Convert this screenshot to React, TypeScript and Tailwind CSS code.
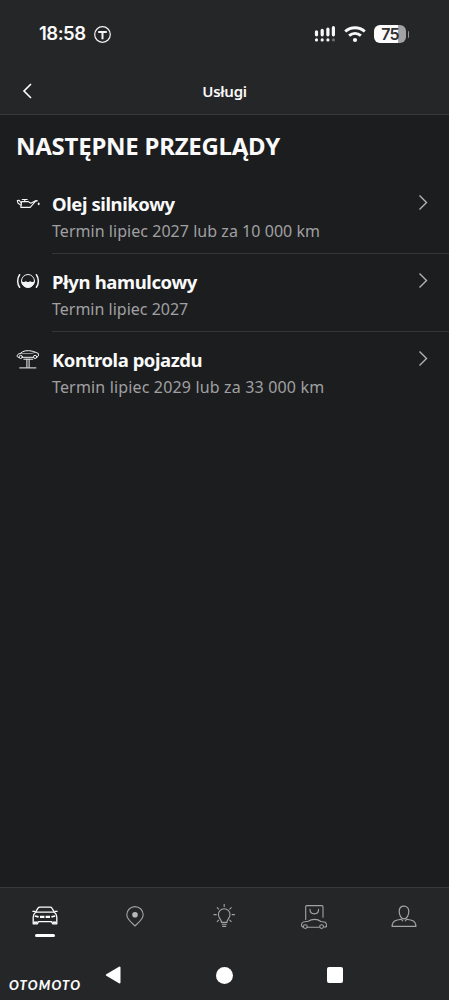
import React from 'react';

const OilIcon: React.FC = () => (
    <svg width="24" height="24" viewBox="0 0 24 24" fill="none" stroke="#f4f4f4" strokeWidth="1.1" strokeLinejoin="round" strokeLinecap="round">
        <path d="M5.6 9.6 4.8 15.4h9.4l5.2-6 2-.7-1.4-.2-5.2 2.8-2.4-1.7Z" />
        <path d="M5.3 11 3 8.2 1.3 8.5l.8 2.8 3 1.9" />
        <path d="M6.2 7.5h5M8.7 7.6v2" />
        <path d="M22.7 11.3v1.2" strokeWidth="1.6" />
    </svg>
);

const BrakeIcon: React.FC = () => (
    <svg width="24" height="24" viewBox="0 0 24 24" fill="none" stroke="#f4f4f4" strokeWidth="1" strokeLinecap="round">
        <circle cx="12" cy="11" r="6.5" />
        <path d="M5.5 11.2c1-.1 1.1.8 2.1.8s1.1-.8 2.2-.8 1.1.8 2.2.8 1.1-.8 2.2-.8 1.1.8 2.2.8 1-.9 2.1-.8c-.2 3.7-2.9 6.3-6.5 6.3s-6.3-2.6-6.5-6.3Z" fill="#f4f4f4" stroke="none" />
        <path d="M3.6 4.7c-2.6 3.6-2.6 9 0 12.6M20.4 4.7c2.6 3.6 2.6 9 0 12.6" strokeWidth="1.5" />
    </svg>
);

const LiftIcon: React.FC = () => (
    <svg width="24" height="24" viewBox="0 0 24 24" fill="none" stroke="#f4f4f4" strokeWidth="1" strokeLinecap="round" strokeLinejoin="round">
        <path d="M2.8 9.5C1.6 9.4 1.2 8.8 1.2 8c0-1.3.8-2.1 3-2.5l2.6-1.8C9 2.2 15.8 2.3 19.2 4.2l3.1 1.2.2 2.4-1.6 1.5M6.5 9.3h10.8" />
        <path d="M4.4 5.6h8.2c2.6 0 4.6-.2 6.4-1.4" strokeWidth=".6" />
        <circle cx="4.7" cy="8.9" r="1.6" />
        <circle cx="19.1" cy="8.9" r="1.6" />
        <path d="M7.8 11.2h9M10.9 11.2v8.1M13.1 11.2v8.1M3.7 19.9h16.2" />
    </svg>
);

const ChevronIcon: React.FC = () => (
    <svg width="10" height="16" viewBox="0 0 10 16" fill="none" stroke="#b5b5b6" strokeWidth="1.4">
        <path d="m1.5 1.5 7 7-7 7" />
    </svg>
);

const CarIcon: React.FC = () => (
    <svg width="28" height="28" viewBox="0 0 28 28" fill="none" stroke="#fff" strokeWidth="1.3" strokeLinejoin="round">
        <path d="M4.6 9.2 7 5.2c.4-.7 1-1 1.9-1h10.2c.9 0 1.5.3 1.9 1l2.4 4" />
        <path d="M1.4 8.4h2.8M23.8 8.4h2.8M4.6 9.2h18.8c1.6 1.2 2.4 2.9 2.4 5v6.6h-4.2l-1-2.1H7.4l-1 2.1H2.2v-6.6c0-2.1.8-3.8 2.4-5Z" />
        <path d="m3.8 13 3.8.8M24.2 13l-3.8.8" strokeWidth="1.7" />
        <path d="M9 13.9h4.4M14.6 13.9H19" strokeWidth="2.1" />
        <path d="M2.8 18.5h4l-.9 2H2.8ZM25.2 18.5h-4l.9 2h3.1Z" fill="#fff" stroke="none" />
    </svg>
);

const PinIcon: React.FC = () => (
    <svg width="28" height="28" viewBox="0 0 28 28" fill="none" stroke="#a3a3a5" strokeWidth="1.1">
        <path d="M14 23c-2.1-2.7-8.2-6.1-8.2-11.2a8.2 8.2 0 0 1 16.4 0c0 5.1-6.1 8.5-8.2 11.2Z" />
        <circle cx="14" cy="11.8" r="2.8" fill="#b8b8b9" stroke="none" />
    </svg>
);

const BulbIcon: React.FC = () => (
    <svg width="28" height="28" viewBox="0 0 28 28" fill="none" stroke="#a3a3a5" strokeWidth="1.1">
        <path d="M11.5 19.4c0-3-3.1-4.2-3.1-7.9a5.8 5.8 0 0 1 11.6 0c0 3.7-3.1 4.9-3.1 7.9Z" />
        <path d="M11.7 21.3h5M12.2 23.4h4M14.2 1v3M3.5 11.6h3.2M21.7 11.6h3.2M6.9 4.3l2 2M21.5 4.3l-2 2M6.9 18.9l2-2M21.5 18.9l-2-2" />
    </svg>
);

const ShopIcon: React.FC = () => (
    <svg width="28" height="28" viewBox="0 0 28 28" fill="none" stroke="#a3a3a5" strokeWidth="1.1" strokeLinejoin="round" strokeLinecap="round">
        <path d="M5.7 16.4V3.8c0-.8.3-1.2 1.1-1.2h15c.8 0 1.2.4 1.2 1.2v10.4" />
        <path d="M10 6.2c0 6.2 8.6 6.2 8.6 0" />
        <path d="M2.8 24.1 1.5 22.8c-.2-2.6.7-3.7 3.2-4l3.4-.6c3.9-2.4 9.4-2.5 12.7.3l4.5.8c1 .8 1.4 2.2 1.2 4.3l-1.8.5M7.2 24.2h12" />
        <circle cx="5.3" cy="23.6" r="1.9" />
        <circle cx="21.6" cy="23.6" r="1.9" />
    </svg>
);

const ProfileIcon: React.FC = () => (
    <svg width="28" height="28" viewBox="0 0 28 28" fill="none" stroke="#a3a3a5" strokeWidth="1.2" strokeLinejoin="round">
        <path d="M14 3.2c-3 0-4.8 2.1-4.8 5.3 0 3.8 2 7.3 4.8 7.3s4.8-3.5 4.8-7.3c0-3.2-1.8-5.3-4.8-5.3Z" />
        <path d="M12.8 18.2c-.6-1.3-1.3-1.9-2.6-1.7l-2.8.5c-3.4.6-5.3 2-5.3 6.4h23.8c0-4.4-1.9-5.8-5.3-6.4l-2.8-.5c-1.3-.2-2 .4-2.6 1.7" />
    </svg>
);

const StatusBar: React.FC = () => (
    <div className="flex h-[68px] items-center pl-[39px] pr-10">
        <span className="w-[47px] whitespace-nowrap font-['Inter',sans-serif] text-[18.5px] font-semibold tracking-[-0.5px]">18:58</span>
        <svg className="ml-2" width="17" height="17" viewBox="0 0 17 17" fill="none" stroke="#f4f4f4">
            <circle cx="8.5" cy="8.5" r="7.8" strokeWidth="1.2" />
            <path d="M4.2 5.9h8.6M8.5 5.9v7.3" strokeWidth="2" />
        </svg>
        <div className="flex-1" />
        <svg width="22" height="18" viewBox="0 0 22 18" stroke="#f8f8f8" strokeWidth="3.2" strokeLinecap="round">
            <path d="M2.5 6.8v3M8.2 5.3v4.5M13.9 4.1v5.7M19.4 2.7v7.1" />
            <path d="M2.5 14.9v.1M8.2 14.9v.1M13.9 14.9v.1" />
            <path d="M19.4 14.9v.1" stroke="#6c6c6e" />
        </svg>
        <svg className="ml-2" width="22" height="18" viewBox="0 0 22 18" fill="none" stroke="#f8f8f8" strokeWidth="2.9">
            <path d="M1.2 6.5c5.6-5 14-5 19.6 0M5.1 10.7c3.5-3 8.3-3 11.8 0" />
            <circle cx="11" cy="15" r="2.1" fill="#f8f8f8" stroke="none" />
        </svg>
        <div className="ml-[8px] flex h-[18px] w-8 items-center justify-center rounded-[6px] bg-[linear-gradient(90deg,#fcfcfc_75%,#a2a2a4_75%)] font-['Inter',sans-serif] text-[16px] font-semibold tracking-[-0.8px] text-[#303033]">
            75
        </div>
        <div className="ml-[1.5px] h-[7px] w-[1.5px] rounded-r bg-[#929294]" />
    </div>
);

const services = [
    { title: 'Olej silnikowy', due: 'Termin lipiec 2027 lub za 10 000 km', icon: OilIcon, titleClass: 'tracking-[-0.41px]', dueClass: 'tracking-[0.04px]' },
    { title: 'Płyn hamulcowy', due: 'Termin lipiec 2027', icon: BrakeIcon, titleClass: 'tracking-[-0.38px]', dueClass: 'tracking-[0px]' },
    { title: 'Kontrola pojazdu', due: 'Termin lipiec 2029 lub za 33 000 km', icon: LiftIcon, titleClass: 'tracking-[-0.46px]', dueClass: 'tracking-[0.16px]' },
];

const tabs = [CarIcon, PinIcon, BulbIcon, ShopIcon, ProfileIcon];

const App: React.FC = () => (
    <div className="flex h-[1000px] w-[449px] flex-col overflow-hidden bg-[#1c1d1f] font-['Noto_Sans',sans-serif] text-[#fafafa]">
        <header className="h-[115px] shrink-0 border-b border-[#38393b] bg-[#252628]">
            <StatusBar />
            <div className="grid h-[46px] grid-cols-[60px_1fr_60px] items-center">
                <svg className="ml-[22px]" width="11" height="16" viewBox="0 0 11 16" fill="none" stroke="#fff" strokeWidth="1.6">
                    <path d="M9 1 2 8l7 7" />
                </svg>
                <h1 className="text-center text-[15px] font-semibold tracking-[-0.25px]">Usługi</h1>
            </div>
        </header>

        <main className="flex-1">
            <h2 className="ml-4 mt-[14px] h-[35px] whitespace-nowrap text-[24px] font-bold leading-[34px] tracking-[-0.25px]">NASTĘPNE PRZEGLĄDY</h2>
            <div className="mt-3">
                {services.map(({ title, due, icon: Icon, titleClass, dueClass }, index) => (
                    <div key={title} className="flex h-[78px] pl-4">
                        <div className="mt-[16px] w-9 shrink-0">
                            <Icon />
                        </div>
                        <div className={`flex flex-1 justify-between border-b ${index < 2 ? 'border-[#343537]' : 'border-transparent'}`}>
                            <div className="whitespace-nowrap pt-[14px]">
                                <p className={`text-[18.5px] font-bold leading-[27px] ${titleClass}`}>{title}</p>
                                <p className={`mt-px text-[16px] leading-[27px] text-[#a0a0a2] ${dueClass}`}>{due}</p>
                            </div>
                            <div className="mr-[21px] mt-[18px]">
                                <ChevronIcon />
                            </div>
                        </div>
                    </div>
                ))}
            </div>
        </main>

        <footer className="h-[113px] shrink-0 border-t border-[#38393b] bg-[#252628]">
            <nav className="grid h-[62px] grid-cols-5">
                {tabs.map((Icon, index) => (
                    <div key={index} className="flex flex-col items-center pt-[15px]">
                        <Icon />
                        {index === 0 && <div className="mt-[3px] h-[3px] w-5 rounded-sm bg-white" />}
                    </div>
                ))}
            </nav>
            <div className="flex h-[50px] items-center">
                <span className="ml-[9px] mt-[21px] w-[72px] whitespace-nowrap font-['Lato',sans-serif] text-[13px] font-black italic tracking-[1.15px]">OTOMOTO</span>
                <svg className="ml-[24px]" width="16" height="18" viewBox="0 0 16 18" fill="#fff" stroke="#fff" strokeWidth="2" strokeLinejoin="round">
                    <path d="M14.5 1.5v15L1.8 9Z" />
                </svg>
                <div className="ml-[95px] size-[17px] rounded-full bg-white" />
                <div className="ml-[94px] size-4 rounded-[2px] bg-white" />
            </div>
        </footer>
    </div>
);

export default App;
